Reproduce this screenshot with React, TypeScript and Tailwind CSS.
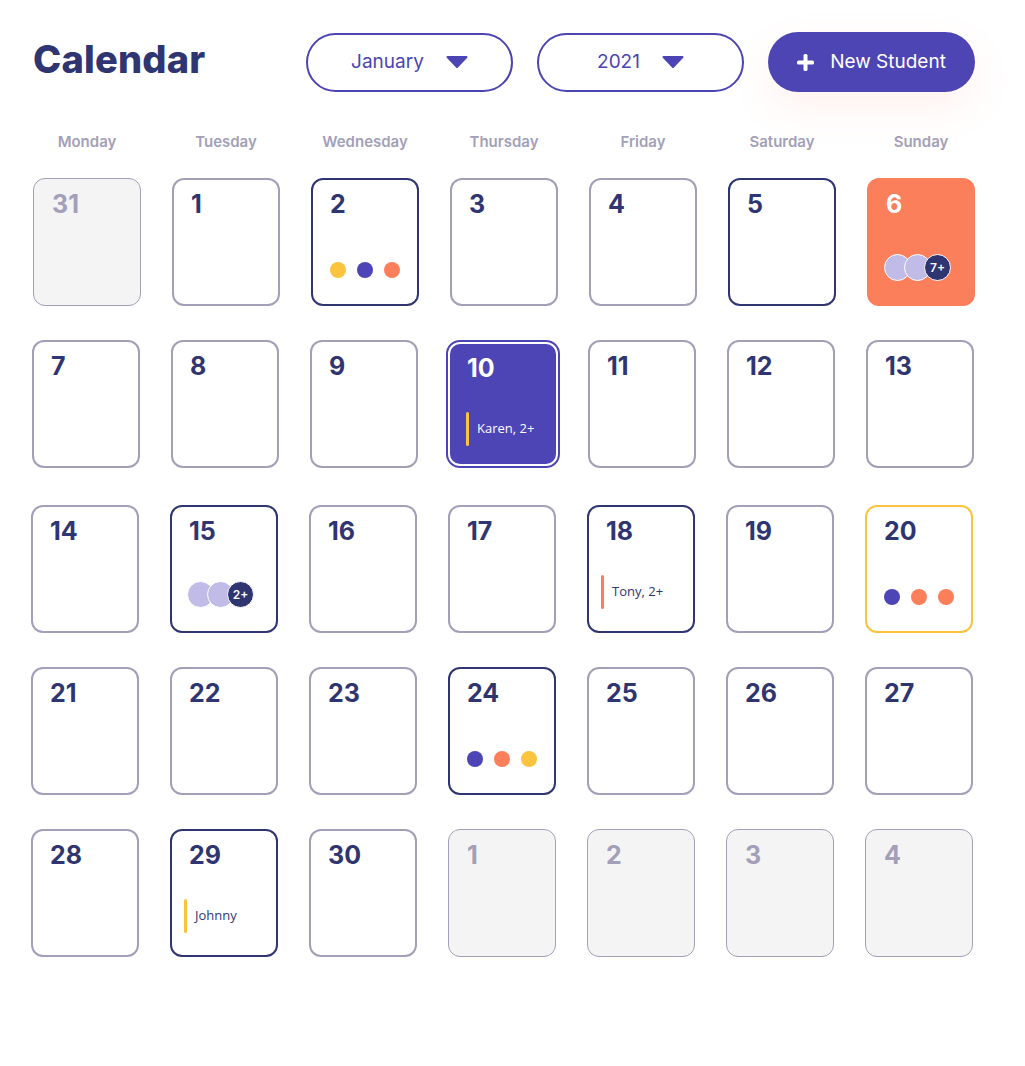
import React from "react";

type Cell = {
  n: number;
  kind?: "muted" | "navy" | "coral" | "yellow" | "selected";
  dots?: string[];
  avatars?: string;
  event?: { text: string; color: string };
};

const Y = "bg-[#fcc43e]";
const P = "bg-[#4d44b5]";
const O = "bg-[#fc7f5b]";

const rows: { cells: Cell[]; cls: string }[] = [
  {
    cls: "mt-[26px] ml-[2px]",
    cells: [
      { n: 31, kind: "muted" },
      { n: 1 },
      { n: 2, kind: "navy", dots: [Y, P, O] },
      { n: 3 },
      { n: 4 },
      { n: 5, kind: "navy" },
      { n: 6, kind: "coral", avatars: "7+" },
    ],
  },
  {
    cls: "mt-[34px] ml-[1px]",
    cells: [
      { n: 7 },
      { n: 8 },
      { n: 9 },
      { n: 10, kind: "selected", event: { text: "Karen, 2+", color: "bg-[#fcc43e]" } },
      { n: 11 },
      { n: 12 },
      { n: 13 },
    ],
  },
  {
    cls: "mt-[37px]",
    cells: [
      { n: 14 },
      { n: 15, kind: "navy", avatars: "2+" },
      { n: 16 },
      { n: 17 },
      { n: 18, kind: "navy", event: { text: "Tony, 2+", color: "bg-[#fc7f5b]" } },
      { n: 19 },
      { n: 20, kind: "yellow", dots: [P, O, O] },
    ],
  },
  {
    cls: "mt-[34px]",
    cells: [
      { n: 21 },
      { n: 22 },
      { n: 23 },
      { n: 24, kind: "navy", dots: [P, O, Y] },
      { n: 25 },
      { n: 26 },
      { n: 27 },
    ],
  },
  {
    cls: "mt-[34px]",
    cells: [
      { n: 28 },
      { n: 29, kind: "navy", event: { text: "Johnny", color: "bg-[#fcc43e]" } },
      { n: 30 },
      { n: 1, kind: "muted" },
      { n: 2, kind: "muted" },
      { n: 3, kind: "muted" },
      { n: 4, kind: "muted" },
    ],
  },
];

const days = ["Monday", "Tuesday", "Wednesday", "Thursday", "Friday", "Saturday", "Sunday"];

function Caret() {
  return (
    <svg width="22" height="12" viewBox="0 0 22 12">
      <polygon
        points="1.5,1 20.5,1 11,11"
        fill="#4c44b3"
        stroke="#4c44b3"
        strokeWidth="2"
        strokeLinejoin="round"
      />
    </svg>
  );
}

function Content({ c, light }: { c: Cell; light?: boolean }) {
  return (
    <>
      {c.dots && (
        <div className="mt-[45px] flex gap-[11px] pl-[17px]">
          {c.dots.map((d, i) => (
            <div key={i} className={`h-[16px] w-[16px] rounded-full ${d}`} />
          ))}
        </div>
      )}
      {c.avatars && (
        <div className="mt-[37px] flex pl-[15px]">
          <div className="h-[27px] w-[27px] rounded-full border border-white bg-[#c1bbe8]" />
          <div className="-ml-[7px] h-[27px] w-[27px] rounded-full border border-white bg-[#c1bbe8]" />
          <div className="-ml-[7px] flex h-[27px] w-[27px] items-center justify-center rounded-full border border-white bg-[#2f3571] text-[12px] font-semibold text-white">
            {c.avatars}
          </div>
        </div>
      )}
      {c.event && (
        <div className={`mt-[31px] flex items-center gap-[8px] ${light ? "pl-[16px]" : "pl-[12px]"}`}>
          <div className={`h-[34px] w-[3px] rounded-full ${c.event.color}`} />
          <span
            className={`font-['Open_Sans',sans-serif] text-[13px] ${light ? "text-white" : "text-[#2f3571]"}`}
          >
            {c.event.text}
          </span>
        </div>
      )}
    </>
  );
}

function Num({ c, color }: { c: Cell; color: string }) {
  return (
    <div className={`pl-[17px] pt-[12px] text-[25px] font-bold leading-[25px] ${color}`}>{c.n}</div>
  );
}

function DayCell({ c }: { c: Cell }) {
  if (c.kind === "selected") {
    return (
      <div className="-mx-[3px] h-[128px] rounded-[14px] border-2 border-[#4d44b5] bg-white p-[2px]">
        <div className="flex h-full flex-col rounded-[10px] bg-[#4d44b5]">
          <Num c={c} color="text-white" />
          <Content c={c} light />
        </div>
      </div>
    );
  }
  let box = "border-2 border-[#a39fb8] bg-white";
  let num = "text-[#2f3571]";
  if (c.kind === "muted") {
    box = "border border-[#a39fb8] bg-[#f4f4f5]";
    num = "text-[#a39fb8]";
  } else if (c.kind === "navy") {
    box = "border-2 border-[#2f3571] bg-white";
  } else if (c.kind === "yellow") {
    box = "border-2 border-[#fcc43e] bg-white";
  } else if (c.kind === "coral") {
    box = "border-2 border-[#fc7f5b] bg-[#fc7f5b]";
    num = "text-white";
  }
  return (
    <div className={`flex h-[128px] flex-col rounded-[12px] ${box}`}>
      <div className={c.kind === "muted" ? "pl-[1px] pt-[1px]" : ""}>
        <Num c={c} color={num} />
      </div>
      <Content c={c} />
    </div>
  );
}

export default function App() {
  return (
    <div className="h-[1066px] w-[1025px] bg-white font-['Inter',sans-serif]">
      <div className="flex h-[92px] items-end pl-[33px]">
        <div className="flex h-[60px] items-center">
          <div className="mb-[6px] w-[273px] text-[38px] font-extrabold leading-[40px] tracking-[0.2px] text-[#2f3571]">
            Calendar
          </div>
          <div className="flex h-[59px] w-[207px] items-center justify-center gap-[22px] rounded-full border-2 border-[#4c44b3] text-[19px] text-[#4c44b3]">
            <span>January</span>
            <Caret />
          </div>
          <div className="ml-[24px] flex h-[59px] w-[207px] items-center justify-center gap-[22px] rounded-full border-2 border-[#4c44b3] text-[19px] text-[#4c44b3]">
            <span>2021</span>
            <Caret />
          </div>
          <div className="ml-[24px] flex h-[60px] w-[207px] items-center justify-center gap-[16px] rounded-full bg-[#4d45b4] text-[19px] text-white shadow-[0_16px_40px_rgba(252,127,91,0.10)]">
            <svg width="17" height="17" viewBox="0 0 17 17">
              <rect x="6.5" y="0" width="4" height="17" rx="1.5" fill="white" />
              <rect x="0" y="6.5" width="17" height="4" rx="1.5" fill="white" />
            </svg>
            <span>New Student</span>
          </div>
        </div>
      </div>

      <div className="mt-[40px] grid grid-cols-[repeat(7,108px)] gap-x-[31px] pl-[33px]">
        {days.map((d) => (
          <div key={d} className="h-[20px] text-center text-[15px] font-semibold leading-[20px] text-[#a39fb8]">
            {d}
          </div>
        ))}
      </div>

      {rows.map((r, i) => (
        <div key={i} className={`grid grid-cols-[repeat(7,108px)] gap-x-[31px] pl-[31px] ${r.cls}`}>
          {r.cells.map((c, j) => (
            <DayCell key={j} c={c} />
          ))}
        </div>
      ))}
    </div>
  );
}
